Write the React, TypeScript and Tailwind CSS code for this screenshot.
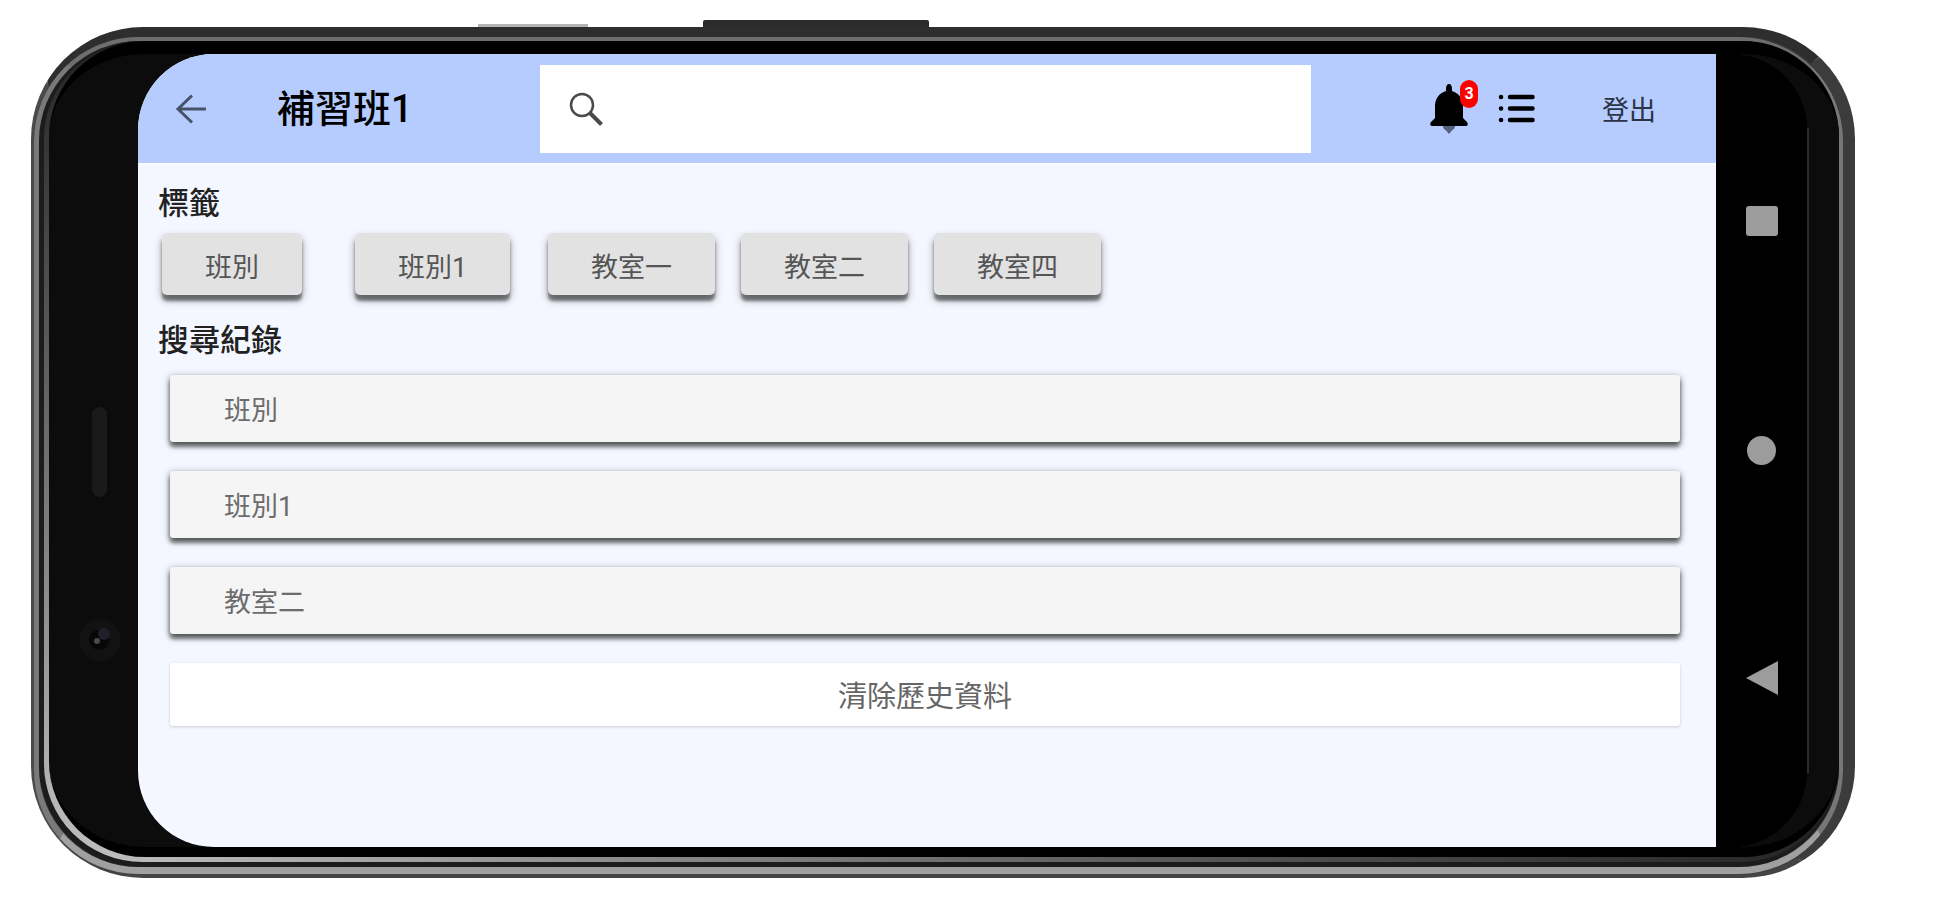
import { useState } from "react";

const tags = ["班別", "班別1", "教室一", "教室二", "教室四"];

const BackIcon = () => (
  <svg width="31" height="30" viewBox="0 0 31 30" fill="none" stroke="#46536b" strokeWidth="3">
    <path d="M31 15H3M17 1.5L3 15l14 13.5" />
  </svg>
);

const SearchIcon = () => (
  <svg width="34" height="34" viewBox="0 0 34 34" fill="none" stroke="#4a4a4a" strokeWidth="2.5">
    <circle cx="13" cy="13" r="11" />
    <path d="M21 21l11.5 11.5" strokeWidth="4" />
  </svg>
);

const BellIcon = () => (
  <svg width="38" height="50" viewBox="0 0 38 50">
    <path d="M13 42h12c0 3-2 3.500-3 4.500L19 50l-3-3.500c-1-1-3-1.500-3-4.500z" fill="#56617c" />
    <path
      d="M19 0c2 0 3 2 3 5v2c7 2 11 8 11 15v12l3.500 3.500C38 39 38.500 42 36 42H2c-2.500 0-2-3-.5-4.500L5 34V22C5 15 9 9 16 7V5c0-3 1-5 3-5z"
      fill="#000"
    />
  </svg>
);

const ListIcon = () => (
  <svg width="37" height="29" viewBox="0 0 37 29" stroke="#000" strokeWidth="4.500" strokeLinecap="round">
    <path d="M3 3h.1M3 14.500h.1M3 26h.1M12 3h22.500M12 14.500h22.500M12 26h22.500" />
  </svg>
);

const Header = () => (
  <header className="flex h-[109px] items-center bg-[#b6ccff]">
    <button type="button" aria-label="返回" className="ml-[37px]">
      <BackIcon />
    </button>
    <h1 className="ml-[71px] w-[263px] text-[38px] leading-[52px] font-medium text-black">補習班1</h1>
    <label className="flex h-[88px] min-w-0 flex-1 items-center bg-white pl-[29px]">
      <SearchIcon />
      <input type="search" aria-label="搜尋" className="h-full min-w-0 flex-1 px-4 text-[27px] outline-none" />
    </label>
    <div className="flex items-center pr-[60px] pl-[119px]">
      <button type="button" aria-label="通知" className="relative mr-[30px]">
        <BellIcon />
        <span className="absolute -top-1 left-[30px] flex h-7 w-[18px] items-center justify-center rounded-full bg-[#ff0000] text-[16px] font-bold text-white">
          3
        </span>
      </button>
      <button type="button" aria-label="選單" className="mr-[67px]">
        <ListIcon />
      </button>
      <button type="button" className="pt-1 text-[27px] leading-10 text-[#2c3346]">
        登出
      </button>
    </div>
  </header>
);

const TagButton = ({ label }: { label: string }) => (
  <div className="w-[193px]">
    <button
      type="button"
      className="h-[62px] rounded-[5px] bg-[#e2e2e2] px-[43px] pt-2 text-[27px] leading-10 text-[#555] shadow-[0_6px_3px_rgba(0,0,0,0.42),0_5px_8px_rgba(0,0,0,0.35)]"
    >
      {label}
    </button>
  </div>
);

const SystemNav = () => (
  <nav className="flex w-[91px] shrink-0 flex-col items-center bg-black pt-[152px]">
    <button type="button" aria-label="最近使用" className="h-[30px] w-[32px] rounded-[3px] bg-[#9c9c9c]" />
    <button type="button" aria-label="主畫面" className="mt-[200px] size-[29px] rounded-full bg-[#9c9c9c]" />
    <button type="button" aria-label="上一頁" className="mt-[196px]">
      <svg width="32" height="34" viewBox="0 0 32 34" fill="#9c9c9c">
        <path d="M0 17L32 0v34z" />
      </svg>
    </button>
  </nav>
);

const Screen = () => {
  const [records, setRecords] = useState(["班別", "班別1", "教室二"]);

  return (
    <div className="min-w-0 flex-1 bg-[#f4f7ff]">
      <Header />
      <main className="border-t-2 border-[#fdfdff] pr-9 pb-[121px] pl-5">
        <h2 className="mt-4 text-[31px] leading-[46px] font-medium text-[#222]">標籤</h2>
        <div className="mt-[6px] flex pl-1">
          {tags.map((tag) => (
            <TagButton key={tag} label={tag} />
          ))}
        </div>
        <h2 className="mt-[23px] text-[31px] leading-[46px] font-medium text-[#222]">搜尋紀錄</h2>
        <div className="mt-[11px] flex flex-col gap-[29px] pl-3">
          {records.map((record) => (
            <button
              key={record}
              type="button"
              className="h-[67px] rounded-[3px] bg-[#f5f5f5] pt-1 pl-[54px] text-left text-[27px] leading-10 text-[#6c6c6c] shadow-[0_5px_4px_rgba(0,0,0,0.45),0_2px_7px_rgba(0,0,0,0.5)]"
            >
              {record}
            </button>
          ))}
          <button
            type="button"
            onClick={() => setRecords([])}
            className="h-[63px] rounded-[3px] bg-white pt-1 text-[29px] leading-10 text-[#666] shadow-[0_1px_3px_rgba(0,0,0,0.18)]"
          >
            清除歷史資料
          </button>
        </div>
      </main>
    </div>
  );
};

export default function App() {
  return (
    <div className="min-h-screen w-full bg-white pr-[89px] pb-[22px] pl-[31px] font-['Roboto','Noto_Sans_CJK_TC',sans-serif]">
      {/* side keys */}
      <div className="flex h-[27px] items-end pl-[447px]">
        <div className="h-[3px] w-[110px] bg-[#b4b4b4]" />
        <div className="ml-[115px] h-[7px] w-[226px] rounded-t-[2px] bg-[#2b2b2b]" />
      </div>

      {/* metal frame, outside in */}
      <div className="rounded-[112px] border-t-[10px] border-r-[12px] border-b-4 border-l-[3px] border-t-[#2e2e2e] border-r-[#3c3c3c] border-b-[#444] border-l-[#4a4a4a] bg-[#3c3c3c]">
        <div className="rounded-[104px] border-t-4 border-r-4 border-b-[7px] border-l-[5px] border-t-[#6e6e6e] border-r-[#777] border-b-[#a0a0a0] border-l-[#7a7a7a] bg-[#6e6e6e]">
          <div className="rounded-[100px] border-b-[5px] border-l-[5px] border-[#1c1c1c] bg-[#1c1c1c]">
            <div className="rounded-[98px] bg-linear-to-tr from-[#c4c4c4] via-[#0c0c0d] via-60% to-[#0c0c0d] pb-[5px] pl-[5px]">
              <div className="flex rounded-[96px] border-t-[13px] border-b-[10px] border-y-black bg-[#0c0c0d]">
                <div className="flex w-[89px] shrink-0 flex-col items-center pt-[353px] pl-3">
                  <div className="h-[90px] w-[15px] rounded-full bg-[#1a1a1a]" />
                  <svg className="mt-[121px]" width="44" height="44" viewBox="0 0 44 44">
                    <circle cx="22" cy="22" r="21" fill="#121212" />
                    <circle cx="21" cy="22" r="10" fill="#070708" />
                    <circle cx="26" cy="16" r="6" fill="#1f2029" />
                    <circle cx="19" cy="23" r="3" fill="#4a4a4c" />
                  </svg>
                </div>
                <div className="flex min-w-0 flex-1 overflow-hidden rounded-[76px] bg-black">
                  <Screen />
                  <SystemNav />
                </div>
                <div className="my-[74px] w-8 shrink-0 border-l-2 border-[#2c2c2c]" />
              </div>
            </div>
          </div>
        </div>
      </div>
    </div>
  );
}
